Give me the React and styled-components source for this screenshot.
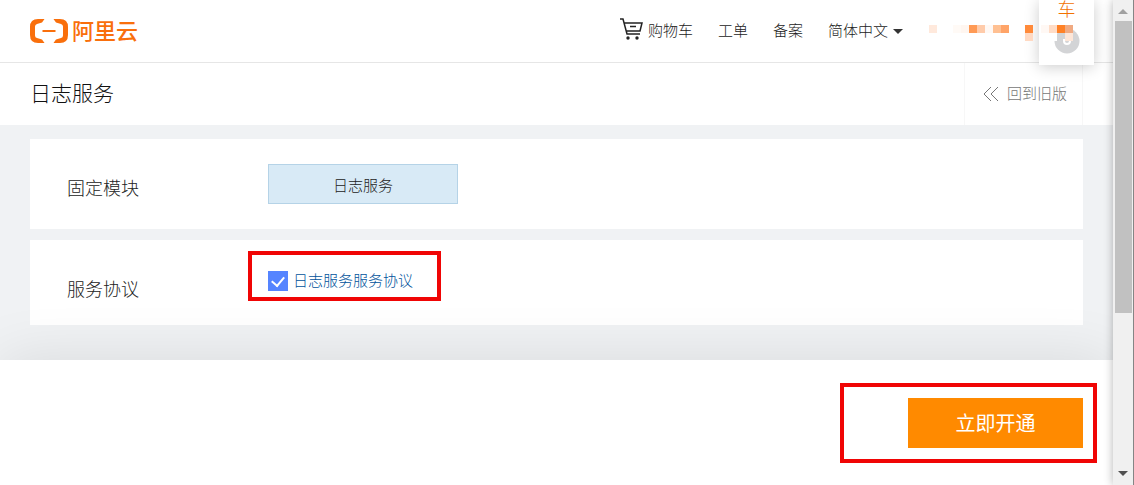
import React from "react";
import styled, { createGlobalStyle } from "styled-components";

const mosaic = [
    [1, 0, "#ffe9dc"],
    [25, 0, "#fffaf6"],
    [33, 0, "#fff6f0"],
    [41, 0, "#ff9a55"],
    [49, 0, "#ffcbaa"],
    [57, 0, "#fff8f4"],
    [65, 0, "#ffc092"],
    [73, 0, "#ffa468"],
    [97, 0, "#ff8a3a"],
    [113, 0, "#fff8f4"],
    [121, 0, "#ffdcc6"],
    [129, 0, "#ff8126"],
    [137, 0, "#f0aa82"],
    [97, 8, "#ffd9c2"],
    [121, 8, "#ffffff"],
    [137, 8, "#fde6d8"],
];

function App() {
    return (
        <>
            <GlobalStyle />
            <Window>
                <Page>
                    <Header>
                        <Logo href="#">
                            <svg width="40" height="26" viewBox="0 0 40 26" aria-hidden="true">
                                <path
                                    d="M14.500 1H8Q0 1 0 9v8q0 8 8 8h6.500l-2.500-3.500-5-1.500q-2-.5-2-2.500V8.500q0-2 2-2.500l5-1.500zM23.500 1H30q8 0 8 8v8q0 8-8 8h-6.500l2.500-3.500 5-1.500q2-.5 2-2.500V8.500q0-2-2-2.500l-5-1.500zM12.500 12h13v2h-13z"
                                    fill="currentColor"
                                />
                            </svg>
                            阿里云
                        </Logo>
                        <Nav>
                            <NavLink href="#">
                                <svg width="24" height="24" viewBox="0 0 24 24" aria-hidden="true">
                                    <path
                                        d="M0 2h3l4 15h13M4 6h18l-2 8H6M10 9.500h6"
                                        fill="none"
                                        stroke="currentColor"
                                        strokeWidth="1.500"
                                    />
                                    <circle cx="8" cy="21" r="1.700" fill="currentColor" />
                                    <circle cx="17" cy="21" r="1.700" fill="currentColor" />
                                </svg>
                                购物车
                            </NavLink>
                            <NavLink href="#">工单</NavLink>
                            <NavLink href="#">备案</NavLink>
                            <LanguageButton type="button">
                                简体中文
                                <Caret />
                            </LanguageButton>
                            <Account width="155" height="16" viewBox="0 0 155 16" aria-hidden="true">
                                {mosaic.map(([x, y, color]) => (
                                    <rect key={`${x}-${y}`} x={x} y={y} width="8" height="8" fill={color} />
                                ))}
                            </Account>
                        </Nav>
                    </Header>
                    <TitleBar>
                        <Title>日志服务</Title>
                        <BackLink href="#">
                            <svg width="16" height="16" viewBox="0 0 16 16" aria-hidden="true">
                                <path
                                    d="M8 1L1 8l7 7M15 1L8 8l7 7"
                                    fill="none"
                                    stroke="currentColor"
                                />
                            </svg>
                            回到旧版
                        </BackLink>
                    </TitleBar>
                    <Content>
                        <Card>
                            <CardLabel>固定模块</CardLabel>
                            <ModuleButton type="button">日志服务</ModuleButton>
                        </Card>
                        <Card>
                            <CardLabel>服务协议</CardLabel>
                            <Agreement>
                                <Checkbox id="agreement" type="checkbox" defaultChecked />
                                <AgreementLabel htmlFor="agreement">日志服务服务协议</AgreementLabel>
                                <Highlight $inset="-20px -28px -10px -20px" />
                            </Agreement>
                        </Card>
                    </Content>
                    <Footer>
                        <Submit>
                            <SubmitButton type="button">立即开通</SubmitButton>
                            <Highlight $inset="-15px -14px -15px -68px" />
                        </Submit>
                    </Footer>
                    <SideWidget>
                        <SideText>车</SideText>
                        <svg width="26" height="26" viewBox="0 0 26 26" aria-hidden="true">
                            <circle cx="13" cy="13" r="12.500" fill="#d3d4d6" />
                            <path d="M10 11v2a3 3 0 0 0 6 0v-2" fill="none" stroke="#fff" strokeWidth="2" />
                        </svg>
                    </SideWidget>
                </Page>
                <Scrollbar>
                    <Arrow $color="#a0a0a0" />
                    <Track>
                        <Thumb />
                    </Track>
                    <Arrow $down $color="#505050" />
                </Scrollbar>
            </Window>
        </>
    );
}

const GlobalStyle = createGlobalStyle`
    * {
        box-sizing: border-box;
    }
    body {
        margin: 0;
        color: #222;
        font-family: "Noto Sans CJK SC", sans-serif;
        font-size: 15px;
        font-weight: 300;
    }
    a {
        color: inherit;
        text-decoration: none;
    }
    button {
        font: inherit;
        color: inherit;
        cursor: pointer;
    }
`;
const Window = styled.div`
    display: flex;
    min-height: 100vh;
    background: #fff;
`;
const Page = styled.div`
    position: relative;
    flex: 1;
    display: flex;
    flex-direction: column;
    overflow: hidden;
`;
const Header = styled.header`
    display: flex;
    align-items: center;
    justify-content: space-between;
    height: 63px;
    padding: 0 30px 4px;
    border-bottom: 1px solid #e6e6e6;
`;
const Logo = styled.a`
    display: flex;
    align-items: center;
    gap: 2px;
    color: #f96f0c;
    font-size: 22px;
    font-weight: 500;

    svg {
        margin-top: 4px;
    }
`;
const Nav = styled.nav`
    display: flex;
    align-items: center;
    gap: 25px;
`;
const NavLink = styled.a`
    display: flex;
    align-items: center;
    gap: 4px;
`;
const LanguageButton = styled.button`
    display: flex;
    align-items: center;
    gap: 5px;
    padding: 0;
    border: none;
    background: none;
`;
const Caret = styled.span`
    margin-top: 4px;
    border: 5px solid transparent;
    border-top-color: #333;
    border-bottom: none;
`;
const Account = styled.svg`
    position: relative;
    z-index: 2;
    margin-top: 8px;
`;
const TitleBar = styled.div`
    display: flex;
    justify-content: space-between;
    align-items: stretch;
    height: 62px;
    padding: 0 30px;
`;
const Title = styled.h1`
    align-self: center;
    margin: 0;
    padding-bottom: 4px;
    color: #111;
    font-size: 21px;
    font-weight: 300;
`;
const BackLink = styled.a`
    display: flex;
    align-items: center;
    gap: 8px;
    padding: 0 15px 4px 18px;
    border: 1px solid #f7f7f7;
    border-width: 0 1px;
    color: #777;

    svg {
        margin-top: 4px;
    }
`;
const Content = styled.main`
    flex: 1;
    display: flex;
    flex-direction: column;
    gap: 11px;
    padding: 14px 30px 35px;
    background: #f0f2f4;
`;
const Card = styled.section`
    display: flex;
    align-items: flex-start;
    padding: 25px 37px;
    background: #fff;
`;
const CardLabel = styled.div`
    flex: 0 0 201px;
    margin-top: 11px;
    font-size: 18px;
    line-height: 24px;
`;
const ModuleButton = styled.button`
    width: 190px;
    height: 40px;
    padding: 0;
    border: 1px solid #b5d3e7;
    background: #d8eaf6;
`;
const Agreement = styled.div`
    position: relative;
    display: flex;
    align-items: center;
    gap: 5px;
    height: 20px;
    margin-top: 6px;
`;
const Checkbox = styled.input`
    appearance: none;
    display: grid;
    place-items: center;
    width: 20px;
    height: 20px;
    margin: 0;
    background: #5584ff;

    &:checked::before {
        content: "";
        width: 6px;
        height: 10px;
        margin-bottom: 2px;
        border: solid #fff;
        border-width: 0 2px 2px 0;
        transform: rotate(40deg);
    }
`;
const AgreementLabel = styled.label`
    padding-bottom: 4px;
    color: #00529b;
`;
const Highlight = styled.span`
    position: absolute;
    inset: ${(props) => props.$inset};
    border: 4px solid #f00505;
    pointer-events: none;
`;
const Footer = styled.footer`
    position: relative;
    display: flex;
    justify-content: flex-end;
    padding: 38px 30px 37px;
    background: #fff;
    box-shadow: 0 0 60px rgba(0, 0, 0, 0.1);
`;
const Submit = styled.div`
    position: relative;
`;
const SubmitButton = styled.button`
    width: 175px;
    height: 50px;
    padding: 0 0 2px;
    border: none;
    background: #ff8a00;
    color: #fff;
    font-size: 20px;
    font-weight: 400;
`;
const SideWidget = styled.aside`
    position: absolute;
    top: 0;
    right: 19px;
    display: flex;
    flex-direction: column;
    align-items: center;
    gap: 12px;
    width: 55px;
    height: 65px;
    background: #fff;
    box-shadow: 0 2px 14px rgba(0, 0, 0, 0.2);
`;
const SideText = styled.span`
    color: #f27100;
    font-size: 18px;
    line-height: 16px;
`;
const Scrollbar = styled.div`
    position: relative;
    flex: 0 0 21px;
    display: flex;
    flex-direction: column;
    align-items: center;
    padding: 9px 0;
    background: #f0f0f0;
    border-right: 1px solid #858585;
    box-shadow: 0 0 10px rgba(0, 0, 0, 0.3);
`;
const Arrow = styled.span`
    border: 5px solid transparent;
    border-top: ${(props) => (props.$down ? `5px solid ${props.$color}` : "none")};
    border-bottom: ${(props) => (props.$down ? "none" : `5px solid ${props.$color}`)};
`;
const Track = styled.div`
    flex: 1;
    width: 17px;
    padding: 7px 0;
`;
const Thumb = styled.div`
    height: 66%;
    background: #c1c1c1;
`;

export default App;
